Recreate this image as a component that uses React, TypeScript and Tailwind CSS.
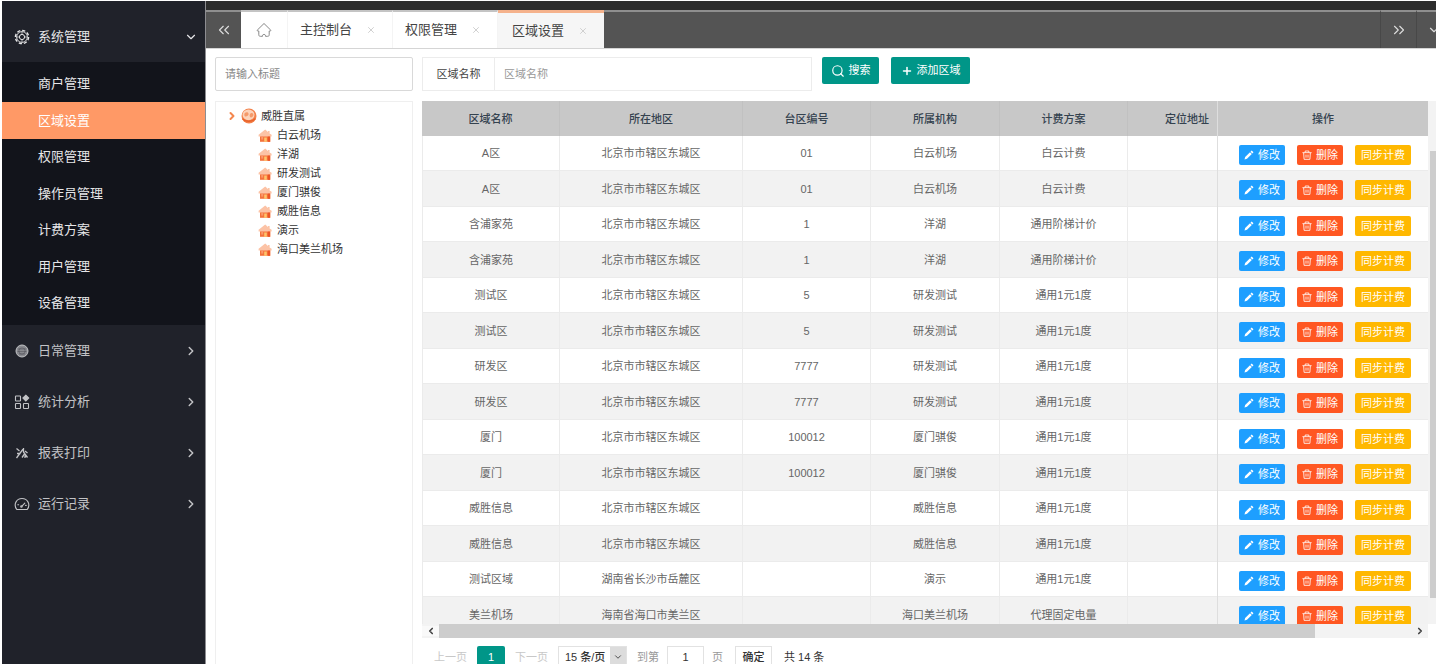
import { ChevronDown, ChevronLeft, ChevronRight, ChevronsLeft, ChevronsRight, Plus, Search, X } from 'lucide-react'

const CHILDREN = ['商户管理', '区域设置', '权限管理', '操作员管理', '计费方案', '用户管理', '设备管理']

const GROUPS = [
  { label: '日常管理', icon: <DailyIcon /> },
  { label: '统计分析', icon: <StatsIcon /> },
  { label: '报表打印', icon: <PrintIcon /> },
  { label: '运行记录', icon: <GaugeIcon /> },
]

const TABS = [
  { label: '主控制台', active: false },
  { label: '权限管理', active: false },
  { label: '区域设置', active: true },
]

const TREE = ['白云机场', '洋湖', '研发测试', '厦门骐俊', '威胜信息', '演示', '海口美兰机场']

const HEADERS = ['区域名称', '所在地区', '台区编号', '所属机构', '计费方案', '定位地址']

const BEIJING = '北京市市辖区东城区'

const ROWS = [
  ['A区', BEIJING, '01', '白云机场', '白云计费', ''],
  ['A区', BEIJING, '01', '白云机场', '白云计费', ''],
  ['含浦家苑', BEIJING, '1', '洋湖', '通用阶梯计价', ''],
  ['含浦家苑', BEIJING, '1', '洋湖', '通用阶梯计价', ''],
  ['测试区', BEIJING, '5', '研发测试', '通用1元1度', ''],
  ['测试区', BEIJING, '5', '研发测试', '通用1元1度', ''],
  ['研发区', BEIJING, '7777', '研发测试', '通用1元1度', ''],
  ['研发区', BEIJING, '7777', '研发测试', '通用1元1度', ''],
  ['厦门', BEIJING, '100012', '厦门骐俊', '通用1元1度', ''],
  ['厦门', BEIJING, '100012', '厦门骐俊', '通用1元1度', ''],
  ['威胜信息', BEIJING, '', '威胜信息', '通用1元1度', ''],
  ['威胜信息', BEIJING, '', '威胜信息', '通用1元1度', ''],
  ['测试区域', '湖南省长沙市岳麓区', '', '演示', '通用1元1度', ''],
  ['美兰机场', '海南省海口市美兰区', '', '海口美兰机场', '代理固定电量', ''],
]

/* ── Icons ──────────────────────────────────────────── */

function GearIcon() {
  return (
    <svg viewBox="0 0 16 16" className="size-4" fill="none" stroke="currentColor">
      <circle cx="8" cy="8" r="6.6" strokeWidth="1.4" strokeDasharray="3.2 1.98" />
      <circle cx="8" cy="8" r="5.4" strokeWidth="0.9" />
      <circle cx="8" cy="8" r="2.6" strokeWidth="1" />
      <path d="M8 2.600v2.800M8 10.600v2.800M2.600 8h2.800M10.600 8h2.800" strokeWidth="0.7" />
    </svg>
  )
}

function DailyIcon() {
  return (
    <svg viewBox="0 0 16 16" className="size-4" fill="none" stroke="currentColor">
      <circle cx="8" cy="8" r="6" fill="currentColor" fillOpacity="0.65" strokeWidth="1" />
      <path d="M4 6h8M3.500 8.500h9M5 11h6" stroke="#20222a" strokeOpacity="0.35" strokeWidth="0.8" />
      <circle cx="8" cy="8" r="3.2" stroke="#20222a" strokeOpacity="0.35" strokeWidth="0.8" />
    </svg>
  )
}

function StatsIcon() {
  return (
    <svg viewBox="0 0 16 16" className="size-4" fill="none" stroke="currentColor" strokeWidth="1.1">
      <rect x="1.5" y="2" width="5" height="5" rx="0.6" />
      <rect x="1.5" y="9.5" width="5" height="5" rx="0.6" />
      <rect x="9.5" y="9.5" width="5" height="5" rx="0.6" />
      <path d="M11.8 1.2l2.9 2.9-2.9 2.9-2.9-2.9z" fill="currentColor" />
    </svg>
  )
}

function PrintIcon() {
  return (
    <svg viewBox="0 0 16 16" className="size-4" fill="none" stroke="currentColor" strokeWidth="1.3">
      <path d="M2.5 3.5l3 2.5M2.5 13l7-9.5M3 8.5h3.5M9.5 3v4l4 5.5M11 6l2.5 2M8 12.5l2.5-3.5M11 10.5v2.5" />
    </svg>
  )
}

function GaugeIcon() {
  return (
    <svg viewBox="0 0 16 16" className="size-4" fill="none" stroke="currentColor" strokeWidth="1.1" strokeLinecap="round">
      <path d="M2.800 13.500C-1 8.500 2.500 2.500 8 2.500s9 6 5.200 11z" strokeLinejoin="round" />
      <path d="M8 10.200l2.800-3M3.800 8.8h.8M12.200 9.400h-.6" />
      <circle cx="7.4" cy="10.5" r="0.7" />
    </svg>
  )
}

function HomeTabIcon() {
  return (
    <svg viewBox="0 0 16 16" className="size-4" fill="none" stroke="currentColor" strokeLinejoin="round">
      <path d="M8 1.5L1.2 8.2c-.2.6.2.9 1.600.8v3.800c0 1 .5 1.500 1.500 1.500h2.200c0-1-.2-1.800 1.500-1.800s1.500.8 1.500 1.800h2.200c1 0 1.500-.5 1.500-1.500V9c1.400.1 1.800-.2 1.600-.8z" />
    </svg>
  )
}

function WorldIcon() {
  return (
    <svg viewBox="0 0 16 16" className="size-4">
      <circle cx="8" cy="8" r="7.5" fill="#f3814a" />
      <ellipse cx="7.500" cy="6.800" rx="6" ry="5.400" fill="#fcd3ba" />
      <path d="M3.500 5.500c1.500-2 3.500-1.500 4 0s-1 2.500-2.500 3-2-1.500-1.500-3zM9 6c1-1.500 3-1 3.400.5S11 9.500 10 9.500 8 7.500 9 6z" fill="#f59a6a" />
      <path d="M1.500 10.800c2.500 3 9.500 3.500 12.800 0" fill="none" stroke="#e8622a" strokeWidth="1.300" />
    </svg>
  )
}

function HouseIcon() {
  return (
    <svg viewBox="0 0 14 14" className="size-3.5">
      <path d="M2 6h10.400v6.800H2z" fill="#f4733c" />
      <path d="M7.200.6L.6 5.800v1.800h13V5.800l-2-1.400V2H10v1z" fill="#fcc3a6" />
      <path d="M6.200 8.500h2.600v4.300H6.200z" fill="#ffc46a" />
      <path d="M3.200 8h2v2.600h-2z" fill="#fb9a6c" />
      <path d="M9.800 7.600h2.200v5.200H9.800z" fill="#ec5524" />
    </svg>
  )
}

function PencilIcon() {
  return (
    <svg viewBox="0 0 12 12" className="size-2.5" fill="currentColor">
      <path d="M9.200.6L11.400 2.800 10 4.200 7.800 2zM7.200 2.600L9.400 4.800 3.600 10.600.6 11.400l.8-3z" />
    </svg>
  )
}

function TrashIcon() {
  return (
    <svg viewBox="0 0 12 12" className="size-2.5" fill="none" stroke="currentColor">
      <path d="M.5 3.200h11M3.800 3V1.200h4.400V3M2 3.500l.5 7.700h7l.5-7.700M4.800 5.500v3.700M7.200 5.500v3.700" />
    </svg>
  )
}

/* ── Sidebar ────────────────────────────────────────── */

function Sidebar() {
  return (
    <nav className="flex w-[204px] shrink-0 flex-col border-r border-[#8d8d91] bg-[#20222a] text-[13px] text-[#c2c3c6]">
      <button className="flex h-[61px] items-center gap-2 pt-2.5 pr-[7px] pl-3 text-left text-[#e6e6e8]">
        <GearIcon />
        <span className="flex-1">系统管理</span>
        <ChevronDown className="size-3.5" />
      </button>
      <ul className="bg-[#12141b] py-1 text-[#e6e6e8]">
        {CHILDREN.map((label) => (
          <li key={label} className="odd:h-9 even:h-[37px]">
            <a
              href="#"
              className={
                label === '区域设置'
                  ? 'flex h-full items-center bg-[#ff9966] pl-9 text-white'
                  : 'flex h-full items-center pl-9'
              }
            >
              {label}
            </a>
          </li>
        ))}
      </ul>
      {GROUPS.map((group) => (
        <button key={group.label} className="flex h-[51px] items-center gap-2 pr-[7px] pl-3 text-left">
          {group.icon}
          <span className="flex-1">{group.label}</span>
          <ChevronRight className="size-3.5" strokeWidth={2.5} />
        </button>
      ))}
    </nav>
  )
}

/* ── Tab bar ────────────────────────────────────────── */

function TabBar() {
  return (
    <header className="shrink-0">
      <div className="h-[9px] bg-[#2d2d2d]" />
      <div className="flex h-[39px] border-b border-[#d5d5d5] bg-[#545454] text-[13px] text-[#444]">
        <button aria-label="向左" className="flex w-[35px] items-center justify-center border-t-2 border-[#8f8f8f] text-[#ddd]">
          <ChevronsLeft className="size-[18px]" strokeWidth={1.5} />
        </button>
        <a href="#" aria-label="首页" className="flex w-[47px] items-center justify-center border-t-2 border-r border-t-[#c4c4c4] border-r-[#f4f4f4] bg-white text-[#888]">
          <HomeTabIcon />
        </a>
        {TABS.map((tab) => (
          <div
            key={tab.label}
            className={
              tab.active
                ? 'flex w-[106px] items-center justify-between border-t-3 border-[#f5b28c] bg-[#f6f6f6] pr-4 pl-3.5'
                : 'flex w-[105px] items-center justify-between border-t-2 border-r border-t-[#c4c4c4] border-r-[#f4f4f4] bg-white pr-4 pl-3'
            }
          >
            <a href="#">{tab.label}</a>
            <button aria-label="关闭" className="text-[#c8c8c8]">
              <X className="size-2.5" strokeWidth={2} />
            </button>
          </div>
        ))}
        <div className="flex-1 border-t-2 border-[#8f8f8f]" />
        <button aria-label="向右" className="flex w-9 items-center justify-center border-t-2 border-l border-t-[#8f8f8f] border-l-[#484848] text-[#ddd]">
          <ChevronsRight className="size-[18px]" strokeWidth={1.5} />
        </button>
        <button aria-label="更多" className="flex w-5 items-center overflow-hidden border-t-2 border-l border-t-[#8f8f8f] border-l-[#484848] pl-2.5 text-[#ddd]">
          <ChevronDown className="size-3.5 shrink-0" />
        </button>
      </div>
    </header>
  )
}

/* ── Tree panel ─────────────────────────────────────── */

function TreePanel() {
  return (
    <aside className="flex w-[198px] shrink-0 flex-col gap-2.5">
      <input
        aria-label="标题"
        placeholder="请输入标题"
        className="h-[34px] w-full shrink-0 rounded-xs border border-[#d9d9d9] px-[9px] text-[11px] outline-none placeholder:text-[#888]"
      />
      <div className="flex-1 border border-b-0 border-[#efefef] pt-1 pl-2.5 text-[11px] text-[#333]">
        <div className="flex h-5 items-center gap-[3px]">
          <ChevronRight className="size-3 text-[#f4874f]" strokeWidth={4} />
          <WorldIcon />
          <span className="pl-px">威胜直属</span>
        </div>
        <ul className="pl-8">
          {TREE.map((label) => (
            <li key={label} className="flex h-[19px] items-center gap-1">
              <HouseIcon />
              <a href="#" className="pl-px">{label}</a>
            </li>
          ))}
        </ul>
      </div>
    </aside>
  )
}

/* ── Search form ────────────────────────────────────── */

function SearchForm() {
  return (
    <div className="flex h-[34px] shrink-0 items-start text-[11px]">
      <label
        htmlFor="area"
        className="flex h-full w-[72px] items-center justify-center border border-r-0 border-[#ececec] text-[#444]"
      >
        区域名称
      </label>
      <input
        id="area"
        placeholder="区域名称"
        className="h-full w-[318px] border border-[#ececec] px-[9px] outline-none placeholder:text-[#999]"
      />
      <button className="ml-2.5 flex h-[27px] w-[57px] items-center justify-center gap-1 rounded-xs bg-[#009688] text-white">
        <Search className="size-3.5" />
        搜索
      </button>
      <button className="ml-3 flex h-[27px] w-[79px] items-center justify-center gap-1 rounded-xs bg-[#009688] text-white">
        <Plus className="size-3" strokeWidth={3} />
        添加区域
      </button>
    </div>
  )
}

/* ── Table ──────────────────────────────────────────── */

function AreaTable() {
  return (
    <div className="flex min-h-0 flex-1 overflow-hidden text-[11px] leading-4 text-[#666]">
      <div className="flex-1 overflow-hidden border-r border-[#dedede]">
        <table className="w-[825px] min-w-full table-fixed border-separate border-spacing-0 text-center">
          <colgroup>
            <col className="w-[138px]" />
            <col className="w-[183px]" />
            <col className="w-[128px]" />
            <col className="w-[129px]" />
            <col className="w-[128px]" />
            <col className="w-[119px]" />
          </colgroup>
          <thead>
            <tr className="h-[35px] bg-[#c8c8c8] text-[#34424f]">
              {HEADERS.map((label) => (
                <th key={label} className="border-r border-[#c1c1c1] p-0 font-medium">{label}</th>
              ))}
            </tr>
          </thead>
          <tbody>
            {ROWS.map((row, i) => (
              <tr key={i} className="odd:h-[35px] even:h-9 even:bg-[#f2f2f2]">
                {row.map((cell, j) => (
                  <td key={j} className="border-r border-b border-[#ebebeb] p-0 first:border-l">{cell}</td>
                ))}
              </tr>
            ))}
          </tbody>
        </table>
      </div>

      {/* Pinned action column */}
      <table className="w-[210px] shrink-0 self-start border-separate border-spacing-0">
        <thead>
          <tr className="h-[35px] bg-[#c8c8c8] text-[#34424f]">
            <th className="p-0 text-center font-medium">操作</th>
          </tr>
        </thead>
        <tbody className="text-white">
          {ROWS.map((_, i) => (
            <tr key={i} className="odd:h-[35px] even:h-9 even:bg-[#f2f2f2]">
              <td className="border-b border-[#ebebeb] px-0 pt-[9px] pb-0 pl-[21px] align-top">
                <div className="flex gap-3">
                  <button className="flex h-5 w-[46px] items-center justify-center gap-1 rounded-xs bg-[#1e9fff]">
                    <PencilIcon />
                    修改
                  </button>
                  <button className="flex h-5 w-[46px] items-center justify-center gap-1 rounded-xs bg-[#ff5722]">
                    <TrashIcon />
                    删除
                  </button>
                  <button className="h-5 w-14 rounded-xs bg-[#ffb800]">同步计费</button>
                </div>
              </td>
            </tr>
          ))}
        </tbody>
      </table>

      <div className="w-2 shrink-0 bg-[#f3f3f3] pt-[50px] pb-[26px] pl-0.5">
        <div className="h-full bg-[#cdcdcd]" />
      </div>
    </div>
  )
}

function HorizontalScroll() {
  return (
    <div className="mr-2 flex h-3.5 shrink-0 items-center bg-[#f3f3f3] text-[#444]">
      <button aria-label="向左滚动" className="flex w-[17px] justify-center bg-[#f9f9f9]">
        <ChevronLeft className="size-2.5" strokeWidth={4} />
      </button>
      <div className="h-full flex-1">
        <div className="h-full w-[90%] bg-[#cdcdcd]" />
      </div>
      <button aria-label="向右滚动" className="flex w-4 justify-center">
        <ChevronRight className="size-2.5" strokeWidth={4} />
      </button>
    </div>
  )
}

function Pagination() {
  return (
    <div className="h-[26px] shrink-0 overflow-hidden pt-2 pl-3">
      <div className="flex h-[22px] items-center text-[11px] text-[#333]">
        <button className="w-[43px] text-left text-[#c8c8c8]">上一页</button>
        <button className="h-full w-7 rounded-xs bg-[#009688] text-white">1</button>
        <button className="w-[53px] text-center text-[#c8c8c8]">下一页</button>
        <div className="relative h-full w-[69px] border border-[#e2e2e2]">
          <select aria-label="每页条数" className="h-full w-full appearance-none pl-1.5 text-[11px] font-medium outline-none">
            <option>15 条/页</option>
          </select>
          <span className="pointer-events-none absolute inset-y-0 right-0 flex w-4 items-center justify-center bg-[#dcdcdc]">
            <ChevronDown className="size-2.5" />
          </span>
        </div>
        <label htmlFor="page" className="pl-2.5 text-[#999]">到第</label>
        <input
          id="page"
          defaultValue="1"
          className="mx-2 h-full w-[37px] border border-[#e2e2e2] text-center outline-none"
        />
        <span className="text-[#999]">页</span>
        <button className="mx-3 h-full w-[37px] border border-[#e2e2e2] font-medium">确定</button>
        <span>共 14 条</span>
      </div>
    </div>
  )
}

export default function App() {
  return (
    <div className="flex h-screen overflow-hidden bg-white pt-px pr-px pl-0.5 font-['Liberation_Sans','Noto_Sans_CJK_SC',sans-serif]">
      <Sidebar />
      <div className="flex min-w-0 flex-1 flex-col">
        <TabBar />
        <main className="flex min-h-0 flex-1 gap-[9px] pt-2 pl-[9px]">
          <TreePanel />
          <section className="flex min-w-0 flex-1 flex-col">
            <div className="pb-2.5">
              <SearchForm />
            </div>
            <AreaTable />
            <HorizontalScroll />
            <Pagination />
          </section>
        </main>
      </div>
    </div>
  )
}
